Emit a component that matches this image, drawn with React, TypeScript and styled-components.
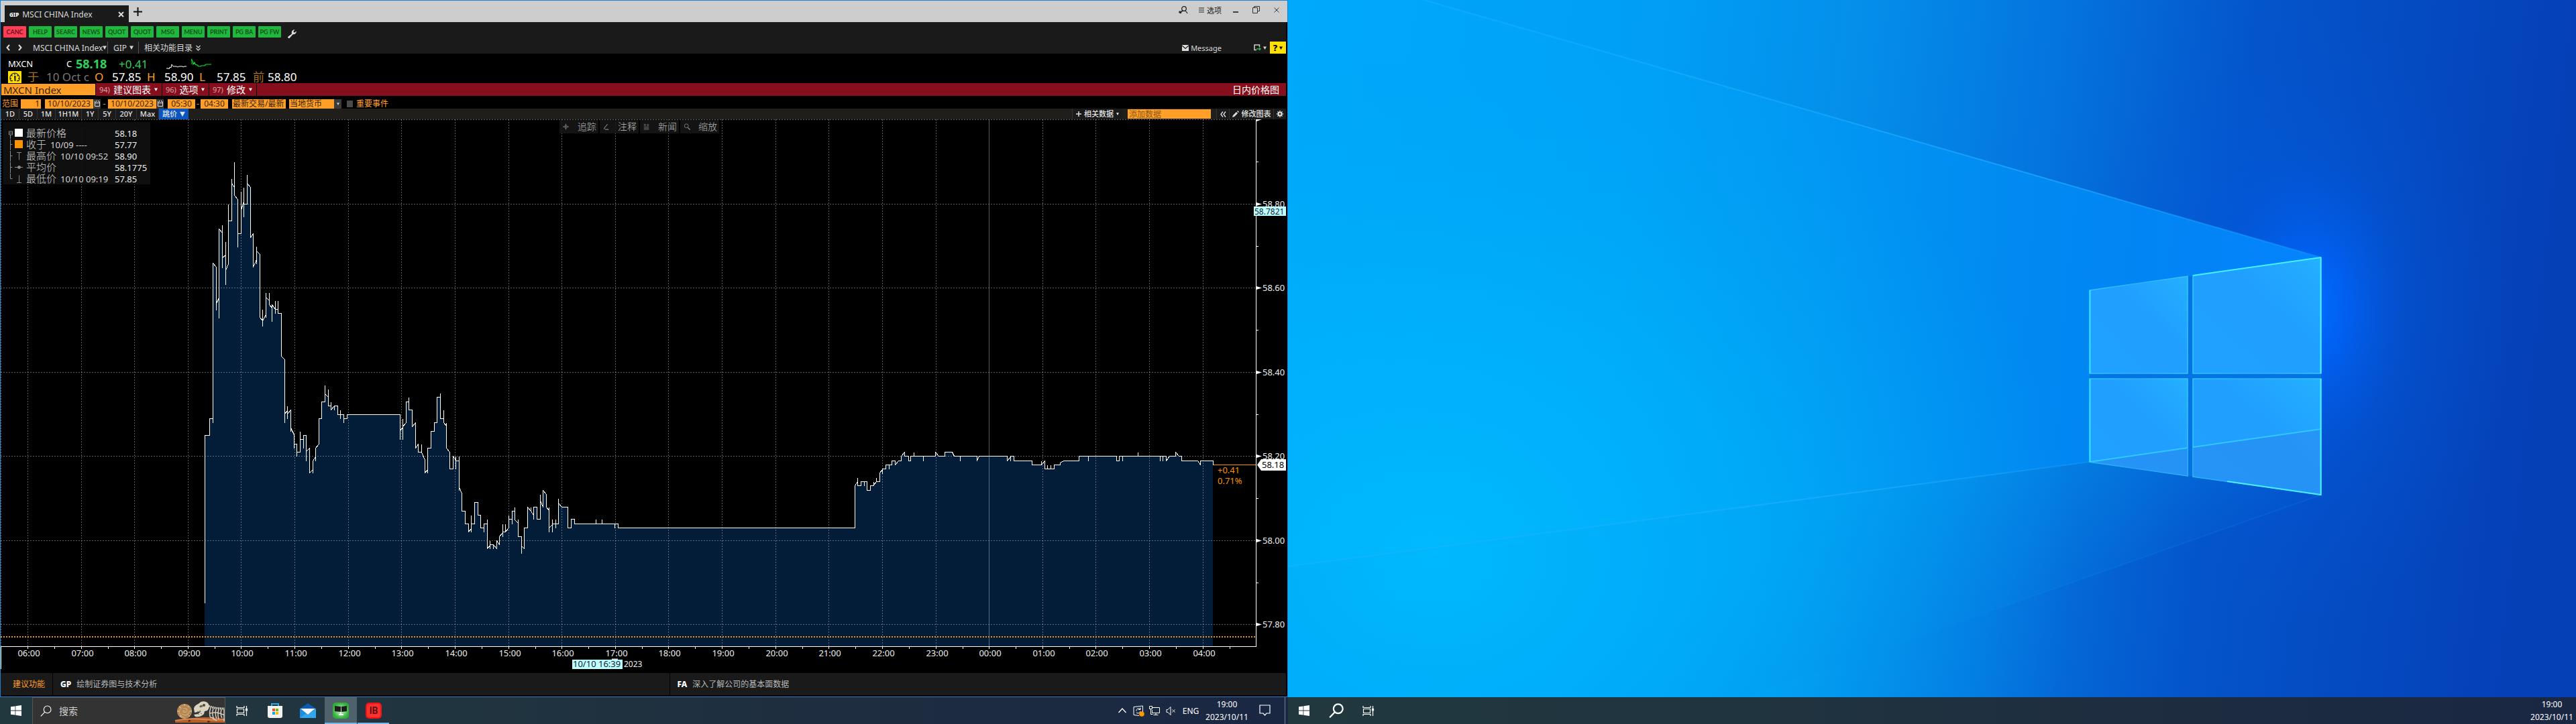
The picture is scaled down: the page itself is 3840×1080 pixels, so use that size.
import React from "react";
import styled, { createGlobalStyle, css } from "styled-components";

const latin = `"Noto Sans", "Noto Sans CJK SC", sans-serif`;

const GlobalStyle = createGlobalStyle`
  * { box-sizing: border-box; }
  html, body, #root { height: 100%; }
  body { margin: 0; background: #000; font-family: ${latin}; font-size: 12px; color: #fff; overflow: hidden; }
  button, input, select { font-family: inherit; font-size: inherit; border: 0; margin: 0; padding: 0; border-radius: 0; color: inherit; background: none; outline: none; }
  svg { display: block; flex: none; }
`;

/* ---------- page ---------- */
const Desktop = styled.div`
  display: grid;
  grid-template-columns: 1fr 1fr;
  height: 100vh;
`;
const Monitor = styled.section`
  display: flex;
  flex-direction: column;
  min-width: 0;
  min-height: 0;
`;
const Window = styled.main`
  flex: 1;
  min-height: 0;
  display: flex;
  flex-direction: column;
  border: 1px solid #1c7fd0;
  background: #000;
`;
const Body = styled.div`
  flex: 1;
  min-height: 0;
  display: flex;
  flex-direction: column;
  padding: 0 2px 2px 0;
`;
const Spacer = styled.div`
  flex: 1;
`;

/* ---------- title bar ---------- */
const TitleBar = styled.header`
  display: flex;
  align-items: flex-end;
  height: 32px;
  padding-left: 6px;
  background: #cdcdcd;
  color: #1a1a1a;
`;
const WindowTab = styled.div`
  display: flex;
  align-items: center;
  gap: 5px;
  width: 185px;
  height: 25px;
  padding: 2px 7px 0;
  background: #1a1a1a;
  color: #d8d8d8;
  font-size: 12px;
  white-space: nowrap;
`;
const TabCode = styled.b`
  font-size: 8px;
  font-weight: 800;
  color: #fff;
`;
const IconButton = styled.button<{ $w?: number }>`
  display: flex;
  align-items: center;
  justify-content: center;
  width: ${(p) => p.$w ?? 24}px;
  height: 100%;
`;
const TitleActions = styled.div`
  display: flex;
  align-items: center;
  height: 27px;
  align-self: flex-start;
  font-size: 11px;
`;
const OptionsButton = styled.button`
  display: flex;
  align-items: center;
  gap: 4px;
  width: 50px;
  padding-left: 10px;
  white-space: nowrap;
`;

/* ---------- toolbars ---------- */
const KeyRow = styled.nav`
  display: flex;
  align-items: flex-start;
  gap: 4px;
  height: 29px;
  padding: 6px 4px 0;
  background: #1a1a1a;
`;
const KeyButton = styled.button<{ $danger?: boolean }>`
  width: 34px;
  height: 17px;
  white-space: nowrap;
  border-radius: 1px;
  background: ${(p) => (p.$danger ? "#ff3e55" : "#1fb83c")};
  color: ${(p) => (p.$danger ? "#5a0c1c" : "#0b4a18")};
  font-family: Lato, sans-serif;
  font-weight: 600;
  font-size: 9px;
  line-height: 15px;
`;
const NavRow = styled.nav`
  display: flex;
  align-items: center;
  height: 18px;
  padding-left: 4px;
  background: #1a1a1a;
  color: #d6d6d6;
  font-size: 12px;
`;
const NavButton = styled.button<{ $w?: number; $small?: boolean }>`
  display: flex;
  align-items: center;
  justify-content: space-between;
  width: ${(p) => (p.$w ? `${p.$w}px` : "auto")};
  height: 18px;
  padding: 0 8px;
  white-space: nowrap;
  font-size: ${(p) => (p.$small ? 11 : 12)}px;
  & + & { box-shadow: -1px 0 0 #555; }
`;
const HelpButton = styled.button`
  display: flex;
  align-items: center;
  justify-content: center;
  gap: 3px;
  width: 24px;
  height: 18px;
  background: #ffe000;
  color: #000;
  font-weight: 800;
  font-size: 13px;
  line-height: 18px;
`;

/* ---------- quote ---------- */
const Quote = styled.section`
  height: 44px;
  padding: 6px 0 0 11px;
`;
const QuoteRow = styled.div`
  display: flex;
  align-items: center;
  height: 19px;
  white-space: nowrap;
`;
const Cell = styled.span<{ $w: number; $c?: string; $strong?: boolean; $small?: boolean }>`
  width: ${(p) => p.$w}px;
  color: ${(p) => p.$c ?? "#fff"};
  font-size: ${(p) => (p.$strong ? 18 : p.$small ? 13 : 17)}px;
  font-weight: ${(p) => (p.$strong ? 700 : 400)};
  line-height: 19px;
`;

/* ---------- function bar ---------- */
const FunctionBar = styled.nav`
  display: flex;
  gap: 1px;
  height: 19px;
  padding-left: 1px;
  background: #000;
`;
const SecurityInput = styled.input`
  width: 140px;
  height: 17px;
  margin: 1px 0;
  padding: 0 3px;
  background: #ff9f28;
  color: #3c2600;
  font-size: 15px;
`;
const FunctionButton = styled.button<{ $w: number }>`
  display: flex;
  align-items: center;
  justify-content: space-between;
  width: ${(p) => p.$w}px;
  padding: 0 6px 0 5px;
  background: #870f1d;
  font-size: 14px;
  line-height: 19px;
  white-space: nowrap;
  small { font-size: 11px; color: #d9a3a9; }
`;
const FunctionTitle = styled.h1`
  flex: 1;
  margin: 0;
  padding-right: 10px;
  background: #870f1d;
  text-align: right;
  font-weight: 400;
  font-size: 14px;
  line-height: 19px;
`;

/* ---------- range ---------- */
const RangeRow = styled.form`
  display: flex;
  align-items: center;
  height: 19px;
  padding: 4px 0 0 2px;
  color: #ff9f28;
  font-size: 12px;
  line-height: 15px;
  white-space: nowrap;
`;
const RangeLabel = styled.label`
  width: 28px;
`;
const field = css`
  height: 14px;
  background: #ff9f28;
  color: #3c2600;
  line-height: 14px;
`;
const RangeInput = styled.input<{ $w: number; $align?: string }>`
  ${field}
  width: ${(p) => p.$w}px;
  text-align: ${(p) => p.$align ?? "center"};
  padding: 0 2px;
`;
const RangeSelect = styled.select<{ $w: number }>`
  ${field}
  appearance: none;
  width: ${(p) => p.$w}px;
  padding: 0 1px;
  font-size: 12px;
`;
const SmallBox = styled.button`
  display: flex;
  align-items: center;
  justify-content: center;
  width: 11px;
  height: 14px;
  background: #3a3a3a;
  color: #ccc;
`;
const Gap = styled.span<{ $w: number }>`
  width: ${(p) => p.$w}px;
  text-align: center;
`;
const EventBox = styled.input`
  appearance: none;
  width: 9px;
  height: 10px;
  margin: 0 5px 0 8px;
  background: #4a4a4a;
`;

/* ---------- period tabs ---------- */
const PeriodRow = styled.nav`
  display: flex;
  align-items: stretch;
  height: 16px;
  background: #1f1e1a;
  color: #e4e4e4;
`;
const PeriodButton = styled.button<{ $w: number; $on?: boolean }>`
  display: flex;
  align-items: center;
  justify-content: center;
  gap: 4px;
  width: ${(p) => p.$w}px;
  border-left: 1px solid #333;
  background: ${(p) => (p.$on ? "#0a55c0" : "#1b1b1b")};
  font-size: 11px;
  font-weight: 500;
  line-height: 16px;
  white-space: nowrap;
`;
const DataInput = styled.input`
  width: 124px;
  height: 14px;
  margin: 1px 8px;
  padding: 0 2px;
  background: #ff9f28;
  color: #3c2600;
  font-size: 12px;
  &::placeholder { color: #8a5a18; opacity: 1; }
`;

/* ---------- chart ---------- */
const ChartArea = styled.section`
  position: relative;
  flex: 1;
  min-height: 0;
  svg.plot { width: 100%; height: 100%; }
`;
const Legend = styled.table`
  position: absolute;
  left: 4px;
  top: 4px;
  width: 219px;
  border-collapse: collapse;
  border-top: 8px solid #0e0e0e;
  background: rgba(16, 16, 16, 0.92);
  color: #d4d4d4;
  font-size: 13px;
  line-height: 16px;
  white-space: nowrap;
  td, th { padding: 0; height: 16px; font-weight: 400; text-align: left; }
  th { width: 132px; font-family: "Noto Sans", sans-serif; }
  td:last-child { color: #f0f0f0; }
`;
const LegendMark = styled.td`
  width: 34px;
`;
const Cjk = styled.span`
  font-family: "Noto Sans CJK SC", sans-serif;
  font-weight: 300;
  font-size: 15px;
  margin-right: 6px;
`;
const ChartTools = styled.div`
  position: absolute;
  left: 833px;
  top: 1px;
  display: flex;
  gap: 2px;
`;
const ToolButton = styled.button`
  display: flex;
  align-items: center;
  justify-content: space-between;
  width: 58px;
  height: 20px;
  padding: 0 3px 0 5px;
  background: rgba(22, 22, 22, 0.85);
  color: #bcbcbc;
  font-size: 14px;
  font-weight: 300;
  line-height: 20px;
`;

/* ---------- footer ---------- */
const Footer = styled.footer`
  display: flex;
  height: 33px;
  background: #1a1a1a;
  color: #b8b8b8;
  font-size: 12px;
  line-height: 33px;
`;
const FooterLead = styled.div`
  width: 77px;
  padding-left: 18px;
  color: #ff9f28;
`;
const FooterLink = styled.a`
  flex: 1;
  padding-left: 11px;
  border-left: 1px solid #000;
  color: inherit;
  text-decoration: none;
  b { color: #fff; font-weight: 800; margin-right: 8px; }
`;

/* ---------- taskbar ---------- */
const Taskbar = styled.footer`
  display: flex;
  align-items: stretch;
  height: 40px;
  background: linear-gradient(90deg, #21383f, #20343f 35%, #1d2b40 75%, #1a2743);
  color: #fff;
  font-size: 12px;
`;
const TaskButton = styled.button<{ $on?: boolean; $open?: boolean; $w?: number }>`
  display: flex;
  align-items: center;
  justify-content: center;
  width: ${(p) => p.$w ?? 48}px;
  background: ${(p) => (p.$on ? "#4f626b" : "transparent")};
  border-bottom: ${(p) => (p.$open ? "2px solid #76b9ed" : "0")};
  padding-top: ${(p) => (p.$open ? 2 : 0)}px;
`;
const Pinned = styled.div`
  display: flex;
  gap: 1px;
  padding-left: 1px;
`;
const SearchBox = styled.label`
  display: flex;
  align-items: center;
  width: 288px;
  padding-left: 11px;
  background: #333;
  border: 1px solid #555;
  border-bottom-width: 0;
  input { width: 166px; margin-left: 11px; font-size: 14px; }
  input::placeholder { color: #d0d0d0; opacity: 1; }
`;
const Tray = styled.div`
  display: flex;
  align-items: center;
  margin-left: auto;
`;
const Language = styled.button`
  width: 36px;
`;
const Clock = styled.time`
  width: 72px;
  text-align: center;
  line-height: 19px;
`;
const ShowDesktop = styled.button`
  width: 5px;
  height: 100%;
  border-left: 1px solid #77808e;
  margin-left: 10px;
`;
const Wallpaper = styled.div`
  flex: 1;
  min-height: 0;
  overflow: hidden;
  svg { width: 100%; height: 100%; }
`;

/* ---------- drawings ---------- */
const Down = ({ s = 6, c = "currentColor" }: { s?: number; c?: string }) => (
  <svg width={s} height={s} viewBox="0 0 6 6"><path d="M0 .5h6L3 6z" fill={c} /></svg>
);
const WinLogo = () => (
  <svg width="16" height="16" viewBox="0 0 16 16" fill="#fff">
    <path d="M0 2.3 6.5 1.4v6.2H0zM7.3 1.3 16 0v7.6H7.3zM0 8.4h6.5v6.2L0 13.7zM7.3 8.4H16V16l-8.7-1.3z" />
  </svg>
);
const SearchGlyph = ({ s, w }: { s: number; w: number }) => (
  <svg width={s} height={s} viewBox="0 0 20 20" fill="none" stroke="#fff" strokeWidth={w}>
    <circle cx="12.5" cy="7.5" r="6.3" /><path d="M8 12 1 19.3" />
  </svg>
);
const TaskView = () => (
  <svg width="18" height="17" viewBox="0 0 18 17" fill="none" stroke="#fff" strokeWidth="1.2">
    <path d="M1 1v2.5h11V1M1 16v-2.500h11V16M1.500 5.500h10v6h-10zM15.500 1v4M15.500 9v7" /><rect x="14.500" y="5.500" width="2" height="2.500" fill="#fff" />
  </svg>
);
const Calendar = () => (
  <svg width="8" height="9" viewBox="0 0 8 9" fill="none" stroke="#ddd"><path d="M.5 1v7.500h7V1M.5 3.500h7M2.500 0v2M5.500 0v2" /></svg>
);
const Fossils = () => (
  <svg width="74" height="34" viewBox="0 0 74 34">
    <path d="M-2 34Q6 28 20 28Q44 24 74 28V34z" fill="#b5602c" />
    <path d="M0 31q20-4 40-2t34 0" stroke="#d98a50" strokeWidth="2" fill="none" />
    <path d="M20 30l4 1-4 2zM48 31l5 1-4 2z" fill="#3a1a0a" />
    <circle cx="14" cy="17" r="11" fill="#c79a68" />
    <path d="M4 20a10 10 0 1 1 11 7M8 24a9 8 0 1 1 13-2a7 7 0 1 1-4-11a5 5 0 1 1-5 9a3 3 0 1 1 4-3" fill="none" stroke="#a07848" strokeWidth="1" />
    <path d="M3 17h3M6 10l2 2M14 6v3M21 9l-2 2M25 17h-3M22 25l-2-2M7 25l2-2" stroke="#f0cfa0" />
    <path d="M28 13c1-5 5-6 8-8 4-4 10-3 13 0 3 4 2 8-1 11l-4 1-1 4c-4 4-8 5-13 4l-2-3 6-1 5-4-5 1-5 1z" fill="#d9d3c0" />
    <circle cx="43" cy="8" r="2" fill="#4a463a" /><path d="M37 9l3-1 1 2-4 1zM33 18l2-1M36 17l2-1M34 21l2 1M38 20l2 1" stroke="#6a6454" fill="#6a6454" />
    <path d="M50 9c6 3 14 4 24 4" stroke="#dcd6c4" strokeWidth="3" strokeDasharray="2 1" fill="none" />
    <path d="M53 12q-3 8 0 15M57 13q-3 8 1 16M61 14q-2 8 1 14M65 14q-2 7 0 15M69 14q-2 8 1 13M73 14v18M52 20q10-3 22 3M54 26l8 5" stroke="#d2ccba" strokeWidth="1.500" fill="none" />
  </svg>
);
const Speedometer = () => (
  <svg width="20" height="18" viewBox="0 0 20 18">
    <rect width="20" height="18" fill="#ffe000" />
    <path d="M4 14.500A7 7.500 0 1 1 16 14.500M4 14.500h3M16 14.500h-3M10 3.500v2.500M5 6l1.500 1.500M15 6l-1.500 1.500M3 11h2M15 11h2" fill="none" stroke="#222" strokeWidth="1.300" />
    <path d="M9 7l2.500 0v8h-2z" fill="#222" />
  </svg>
);

/* ---------- chart data: screen-space trace of the session ---------- */
const trace =
  "M305 899V649H312V624H317V630V392L322 398V462V452L326 444V474V341L331 347V335V399V384L336 380V360V424V403L340 393V304V329H345V266V273L349 279V241V291L354 297V368V348H359V285V313L363 300V279V323V304H368V260V273L373 279V354L377 348V398L382 387V393V367V374L387 379V473L391 478V461V486V478L396 469V473V436V443L401 448V436V454L405 459V479V454L410 461V448V467V461H414V448V467H419V531L424 536V630V617L428 612V605V624V617L433 611" +
  "V643V638L438 648V668V662H442V680V674H447V643V655H452V668V649H456V687V673L461 668V705L466 700V705V687L470 681V687V668L475 662V624H479V599H484V574V587L489 592V580V605H493V599V611L498 605V611V605H503V618H507V611V624V618H512V630V624H517V618H596V655V642L600 637V624V655V636L605 630V599H609V592V611H614V636L619 630V668L623 662V674H628V662V674L633 686V705L637 700V705V668H642V643H647V630H651V592H656V586V624H661V611V630L665 635V630V668L670 674V699H675V680L679 686V680V699V687H684V680V731V726L688 736V762H693V781H698V793L702 788V768V793V781H707V749H712V768H716V787H721" +
  "V793V781H726V774V818L730 813V806V818V812H735V818V812L740 818V806L744 812V800L749 794V781V800V793H753V781V793L758 787V768V774H763V781V762H767V756V775L772 780V774V800H777V825V814L781 818V787H786V756L791 762V756V762L795 768V774V756H800V774H805V737V746L809 756V731L814 737V756L818 761V756V793V787L823 782V774V793V781H828V774V787V781H832V743V750L837 756H846V787H851V774H856V781H888V774V781H897V774V781H916V787V781H921V787H1274" +
  "V724L1278 718V712V724H1283V718H1288V724V718H1292V731H1297V724H1302V718V723L1306 718V712V718H1311V705L1315 700V706V699H1320V693H1325V699V693H1329V687H1334V693L1339 687H1343V680L1348 674V680H1354V687H1357V680H1362V674V680H1376V687V680H1394V674L1399 680H1408V674H1419L1422 680H1431V687V680H1456V687L1459 680H1501V687L1506 681V687V680H1511V687H1538V693H1552V687V693L1557 687V699H1561V693V699H1566V693V699H1571V693H1580V690L1585 687H1608V680H1622V687V680H1664V687H1668V680H1673V687V680H1696V674V680H1729V687V680H1733V687V680H1738V687L1743 680H1752V674L1757 680H1761V687H1785L1789 693V687H1808V693";

const hours = ["06", "07", "08", "09", "10", "11", "12", "13", "14", "15", "16", "17", "18", "19", "20", "21", "22", "23", "00", "01", "02", "03", "04"];
const hourX = (i: number) => Math.round(41 + i * 79.62);
const prices: [string, number][] = [["58.80", 304], ["58.60", 429], ["58.40", 555], ["58.20", 680], ["58.00", 806], ["57.80", 931]];

const Plot = () => (
  <svg className="plot" viewBox="1 178 1916 826" fontFamily={`"Noto Sans", sans-serif`} fontSize="13" role="img" aria-label="MXCN Index">
    <g shapeRendering="crispEdges">
      <path d={`${trace}V964H305Z`} fill="#031d38" />
      <g stroke="#c4cdd6" strokeOpacity=".45" strokeDasharray="2 2">
        <path d="M1 178.500H1872M1.500 178V964" />
        {prices.map(([p, y]) => <path key={p} d={`M1 ${y + 0.5}H1872`} />)}
        {hours.map((h, i) => <path key={h} d={`M${hourX(i) + 0.5} 178V964`} strokeDasharray={h === "00" ? "none" : "2 2"} />)}
      </g>
      <path d="M1 950H1872" stroke="#f79400" strokeWidth="2" strokeDasharray="2 2" />
      <path d={trace} transform="translate(.5 .5)" fill="none" stroke="#fff" />
      <path d="M1809 693.500H1872" stroke="#f79400" />
      <path d="M1872.500 178V964.500H1M1.500 964V998" fill="none" stroke="#fff" />
      {hours.map((h, i) => <path key={h} d={`M${hourX(i) + 0.5} 964v4M${hourX(i) + 40.5} 964v4`} stroke="#fff" />)}
      {[241, 367, 492, 618, 743, 869].map((y) => <path key={y} d={`M1873 ${y + 0.5}h3`} stroke="#fff" />)}
    </g>
    <path d="M1873 178h8l-8 3z" fill="#fff" />
    {prices.map(([p, y]) => (
      <g key={p}>
        <path d={`M1873 ${y - 2}l8 2.500-8 2.500z`} fill="#fff" />
        <text x="1882" y={y + 5} fill="#eee">{p}</text>
      </g>
    ))}
    {hours.map((h, i) => <text key={h} x={hourX(i) + 2} y="979" fill="#eee" textAnchor="middle">{h}:00</text>)}
    <rect x="1869" y="308" width="48" height="14" fill="#c0ffff" />
    <text x="1870" y="320" fontSize="12" fill="#123">58.7821</text>
    <path d="M1880 685h37v17h-37l-6-8.500z" fill="#fff" />
    <text x="1881" y="698" fill="#000">58.18</text>
    <text x="1815" y="706" fill="#f79400">+0.41</text>
    <text x="1815" y="722" fill="#f79400">0.71%</text>
    <path d="M912 982.500h9v2h-9z" fill="#ddd" />
    <rect x="853" y="984" width="75" height="14" fill="#c0ffff" />
    <text x="854" y="995" fill="#123">10/10 16:39</text>
    <text x="930" y="995" fill="#eee" fontSize="12">2023</text>
  </svg>
);

const WallpaperArt = () => (
  <svg viewBox="0 0 1920 1040" preserveAspectRatio="none" aria-hidden="true">
    <defs>
      <linearGradient id="base" x1="0" x2="1" y1="0" y2=".06">
        <stop offset="0" stopColor="#00a6f9" /><stop offset=".28" stopColor="#009ff5" /><stop offset=".45" stopColor="#048eea" />
        <stop offset=".6" stopColor="#0474de" /><stop offset=".75" stopColor="#0455cb" /><stop offset="1" stopColor="#0540b7" />
      </linearGradient>
      <linearGradient id="beam" x1="0" x2="1540" y1="0" y2="0" gradientUnits="userSpaceOnUse">
        <stop offset="0" stopColor="#00aeff" stopOpacity=".4" /><stop offset=".45" stopColor="#00a0f8" stopOpacity=".55" />
        <stop offset=".75" stopColor="#008cf6" stopOpacity=".85" /><stop offset="1" stopColor="#0488ff" stopOpacity=".9" />
      </linearGradient>
      <linearGradient id="low" x1="1000" y1="640" x2="1200" y2="960" gradientUnits="userSpaceOnUse">
        <stop offset="0" stopColor="#0096f0" stopOpacity=".8" /><stop offset=".5" stopColor="#0486e6" stopOpacity=".45" /><stop offset="1" stopColor="#0478dc" stopOpacity="0" />
      </linearGradient>
      <radialGradient id="cyan" cx="0" cy="0" r="1" gradientUnits="userSpaceOnUse" gradientTransform="translate(220 830) scale(960 800)">
        <stop offset="0" stopColor="#00bcff" stopOpacity=".9" /><stop offset=".5" stopColor="#00b2fa" stopOpacity=".65" /><stop offset="1" stopColor="#00a4f4" stopOpacity="0" />
      </radialGradient>
      <radialGradient id="glow" cx="0" cy="0" r="1" gradientUnits="userSpaceOnUse" gradientTransform="translate(1525 460) scale(150 240)">
        <stop offset="0" stopColor="#006eff" /><stop offset=".35" stopColor="#0064fa" stopOpacity=".7" /><stop offset="1" stopColor="#0455d8" stopOpacity="0" />
      </radialGradient>
      <radialGradient id="halo" cx="0" cy="0" r="1" gradientUnits="userSpaceOnUse" gradientTransform="translate(1500 470) scale(330 460)">
        <stop offset="0" stopColor="#0060f0" stopOpacity=".6" /><stop offset="1" stopColor="#0455d8" stopOpacity="0" />
      </radialGradient>
      <linearGradient id="ray" x1="0" x2="1" y1="0" y2="0">
        <stop offset="0" stopColor="#20b4ff" stopOpacity=".4" /><stop offset=".7" stopColor="#22acff" stopOpacity=".7" /><stop offset="1" stopColor="#22a8ff" stopOpacity=".3" />
      </linearGradient>
      <linearGradient id="pane" x1="0" x2="1" y1="1" y2="0">
        <stop offset="0" stopColor="#20a0ff" /><stop offset=".6" stopColor="#209fff" /><stop offset="1" stopColor="#24b0ff" />
      </linearGradient>
      <linearGradient id="edge" x1="0" x2="1" y1="0" y2="0">
        <stop offset="0" stopColor="#2cc8ff" /><stop offset=".5" stopColor="#2ab4ff" /><stop offset="1" stopColor="#34c8ff" />
      </linearGradient>
    </defs>
    <rect width="1920" height="1040" fill="url(#base)" />
    <rect width="1920" height="1040" fill="url(#halo)" />
    <rect width="1920" height="1040" fill="url(#glow)" />
    <path d="M0 845 1195 689 1540 738 680 1040H0Z" fill="url(#low)" />
    <path d="M0 0H203L1540 384V560L1195 689 0 845Z" fill="url(#beam)" />
    <rect width="1300" height="1040" fill="url(#cyan)" />
    <path d="M203 0 1540 384" stroke="url(#ray)" strokeWidth="2" />
    <path d="M0 845 1195 689" stroke="url(#ray)" strokeWidth="2" />
    <path d="M1540 738 900 963" stroke="#1090f0" strokeOpacity=".2" strokeWidth="2" />
    <path d="M1195 433 1540 384V738L1195 689Z" fill="#0474e4" />
    <g fill="url(#pane)" stroke="url(#edge)" strokeWidth="1.5">
      <path d="M1195 433 1341 412V557H1195Z" />
      <path d="M1349 411 1540 384V557H1349Z" />
      <path d="M1195 565H1341V710L1195 689Z" />
      <path d="M1349 565H1540V738L1349 711Z" />
    </g>
    <path d="M1195 689 1341 668V710ZM1349 667 1540 640V738L1349 711Z" fill="#2a8cf0" fillOpacity=".6" />
    <path d="M1195 689 1341 668M1349 667 1540 640" stroke="#30c8ff" strokeWidth="2" />
    <path d="M1195.500 433V557M1195.500 565V689" stroke="#30e0ff" strokeWidth="2" />
    <path d="M1349 411 1540 384M1539.500 384V557M1539.500 565V738L1400 718" fill="none" stroke="#44f0ff" strokeWidth="2" />
  </svg>
);

const keys = ["CANC", "HELP", "SEARC", "NEWS", "QUOT", "QUOT", "MSG", "MENU", "PRINT", "PG BA", "PG FW"];
const periods: [string, number][] = [["1D", 27], ["5D", 27], ["1M", 27], ["1H1M", 39], ["1Y", 25], ["5Y", 26], ["20Y", 31], ["Max", 33]];

const orange = "#f79400";

const LegendGlyph = ({ kind }: { kind: number }) => (
  <svg width="34" height="16" viewBox="0 0 34 16" fill="none" stroke="#8a8a8a">
    {kind === 0 && <><path d="M8.500 5h5v5h-5zM9.500 7.500h3M10.500 10v6" /><rect x="17" y="1" width="12" height="12" fill="#fff" stroke="none" /></>}
    {kind === 1 && <><path d="M10.500 0v16M10.500 7.500h3" /><rect x="17" y="1" width="12" height="12" fill={orange} stroke="none" /></>}
    {kind === 2 && <path d="M10.500 0v16M10.500 7.500h3M20 2.500h7M23.500 2.500v11" />}
    {kind === 3 && <><path d="M10.500 0v16M10.500 7.500h3M17 7.500h12" /><circle cx="23.500" cy="7.500" r="2" fill="#8a8a8a" /></>}
    {kind === 4 && <path d="M10.500 0v7.500h3M20 13.500h7M23.500 2.500v11" />}
  </svg>
);
const legendRows: [string, string, string][] = [
  ["最新价格", "", "58.18"],
  ["收于", "10/09 ----", "57.77"],
  ["最高价", "10/10 09:52", "58.90"],
  ["平均价", "", "58.1775"],
  ["最低价", "10/10 09:19", "57.85"],
];

export default function App() {
  return (
    <Desktop>
      <GlobalStyle />
      <Monitor>
        <Window>
          <TitleBar>
            <WindowTab>
              <TabCode>GIP</TabCode>
              <span>MSCI CHINA Index</span>
              <Spacer />
              <IconButton $w={10} aria-label="关闭标签">
                <svg width="9" height="9" viewBox="0 0 9 9" stroke="#ddd" strokeWidth="2"><path d="M1 1l7 7M8 1 1 8" /></svg>
              </IconButton>
            </WindowTab>
            <IconButton $w={26} aria-label="新标签">
              <svg width="13" height="13" viewBox="0 0 13 13" stroke="#111" strokeWidth="2"><path d="M6.500 0v13M0 6.500h13" /></svg>
            </IconButton>
            <Spacer />
            <TitleActions>
              <IconButton $w={26} aria-label="查找用户">
                <svg width="14" height="12" viewBox="0 0 14 12" fill="none" stroke="#222" strokeWidth="1.300"><circle cx="8" cy="4" r="3.300" /><path d="M3 11q1-4 4-4M9 7q3 1 4 4M0 9h4M2 7v4" /></svg>
              </IconButton>
              <OptionsButton>
                <svg width="8" height="8" viewBox="0 0 8 8" stroke="#222"><path d="M0 1h8M0 4h8M0 7h8" /></svg>选项
              </OptionsButton>
              <IconButton $w={30} aria-label="最小化">
                <svg width="8" height="8" viewBox="0 0 8 8" stroke="#111" strokeWidth="1.500"><path d="M0 7h8" /></svg>
              </IconButton>
              <IconButton $w={30} aria-label="还原">
                <svg width="11" height="11" viewBox="0 0 11 11" fill="none" stroke="#333"><path d="M.5 2.500h7v8h-7zM2.500 2.500v-2h8v7h-3" /></svg>
              </IconButton>
              <IconButton $w={32} aria-label="关闭">
                <svg width="8" height="8" viewBox="0 0 8 8" stroke="#333"><path d="M.5.5l7 7M7.500.5l-7 7" /></svg>
              </IconButton>
            </TitleActions>
          </TitleBar>
          <Body>
            <KeyRow>
              {keys.map((k, i) => <KeyButton key={i} $danger={i === 0}>{k}</KeyButton>)}
              <IconButton $w={24} aria-label="设置">
                <svg width="13" height="13" viewBox="0 0 13 13"><path d="M0 11 6 6.500Q5 3 7.500 1 9 0 10.500.3L8.500 2.500l.3 1.700 1.700.4 2.200-2Q13 4.500 11.500 6 10 7.500 7.600 7.200L2.500 13q-1 .3-1.800-.4T0 11z" fill="#ddd" /></svg>
              </IconButton>
            </KeyRow>
            <NavRow>
              <IconButton $w={13} aria-label="后退"><svg width="6" height="10" viewBox="0 0 6 10" fill="none" stroke="#ddd" strokeWidth="2"><path d="M5 1 1.500 5 5 9" /></svg></IconButton>
              <IconButton $w={23} aria-label="前进"><svg width="6" height="10" viewBox="0 0 6 10" fill="none" stroke="#ddd" strokeWidth="2"><path d="M1 1l3.500 4L1 9" /></svg></IconButton>
              <NavButton $w={120}>MSCI CHINA Index <Down /></NavButton>
              <NavButton $w={46}>GIP <Down /></NavButton>
              <NavButton $w={100}>相关功能目录
                <svg width="7" height="9" viewBox="0 0 7 9" fill="none" stroke="#ccc" strokeWidth="1.300"><path d="M.5 1l3 3 3-3M.5 5l3 3 3-3" /></svg>
              </NavButton>
              <Spacer />
              <NavButton $w={75} $small>
                <svg width="10" height="9" viewBox="0 0 10 9"><path d="M0 0h10v9H0z" fill="#ddd" /><path d="M0 1l5 4.500L10 1" fill="none" stroke="#1a1a1a" strokeWidth="1.300" /></svg>
                Message
              </NavButton>
              <IconButton $w={64} aria-label="导出">
                <Gap $w={34} />
                <svg width="11" height="10" viewBox="0 0 11 10" fill="none" stroke="#ccc" strokeWidth="1.500"><path d="M8.500 4V1H1v7.500h3" /><path d="M4 7h6M8 5l2 2-2 2" stroke="#23b843" /></svg>
                <Gap $w={3} /><Down s={5} />
              </IconButton>
              <HelpButton aria-label="帮助">?<Down s={5} /></HelpButton>
            </NavRow>

            <Quote>
              <QuoteRow>
                <Cell $w={87} $small>MXCN</Cell>
                <Cell $w={14} $small>C</Cell>
                <Cell $w={64} $strong $c="#2fd15a">58.18</Cell>
                <Cell $w={71} $c="#2fd15a">+0.41</Cell>
                <Cell $w={37}>
                  <svg width="30" height="20" viewBox="0 0 30 20" fill="none" stroke="#fff"><path d="M0 16h3l1 1 1-3 2 1 1-5 2 3h5l2 1 2-1h5l1 1 2-1h3" /></svg>
                </Cell>
                <svg width="30" height="19" viewBox="0 0 30 19" fill="none" stroke="#00f028" strokeWidth="1.200"><path d="M0 10V2l2 3 1 5 2-3 1 3 3 1 2 2h3l1-1h5l2-2h8" /></svg>
              </QuoteRow>
              <QuoteRow>
                <Cell $w={29}><Speedometer /></Cell>
                <Cell $w={28} $c="#a8701c">于</Cell>
                <Cell $w={72} $c="#777">10 Oct c</Cell>
                <Cell $w={26} $c="#ff9f28">O</Cell><Cell $w={52}>57.85</Cell>
                <Cell $w={26} $c="#ff9f28">H</Cell><Cell $w={52}>58.90</Cell>
                <Cell $w={26} $c="#ff9f28">L</Cell><Cell $w={54}>57.85</Cell>
                <Cell $w={22} $c="#a8701c">前</Cell><Cell $w={52}>58.80</Cell>
              </QuoteRow>
            </Quote>

            <FunctionBar>
              <SecurityInput aria-label="证券" defaultValue="MXCN Index" />
              <FunctionButton $w={98}><small>94)</small>建议图表<Down s={5} /></FunctionButton>
              <FunctionButton $w={69}><small>96)</small>选项<Down s={5} /></FunctionButton>
              <FunctionButton $w={70}><small>97)</small>修改<Down s={5} /></FunctionButton>
              <FunctionTitle>日内价格图</FunctionTitle>
            </FunctionBar>

            <RangeRow>
              <RangeLabel htmlFor="days">范围</RangeLabel>
              <RangeInput id="days" $w={30} $align="right" defaultValue="1" />
              <Gap $w={6} />
              <RangeInput aria-label="开始日期" $w={72} defaultValue="10/10/2023" />
              <SmallBox type="button" aria-label="选择开始日期"><Calendar /></SmallBox>
              <Gap $w={11}>-</Gap>
              <RangeInput aria-label="结束日期" $w={72} defaultValue="10/10/2023" />
              <SmallBox type="button" aria-label="选择结束日期"><Calendar /></SmallBox>
              <Gap $w={6} />
              <RangeInput aria-label="开始时间" $w={41} defaultValue="05:30" />
              <Gap $w={8}>-</Gap>
              <RangeInput aria-label="结束时间" $w={41} defaultValue="04:30" />
              <Gap $w={6} />
              <RangeSelect aria-label="价格类型" $w={80}><option>最新交易/最新</option></RangeSelect>
              <Gap $w={5} />
              <RangeSelect aria-label="货币" $w={67}><option>当地货币</option></RangeSelect>
              <SmallBox type="button" aria-label="展开"><Down s={4} /></SmallBox>
              <EventBox id="events" type="checkbox" />
              <label htmlFor="events">重要事件</label>
            </RangeRow>

            <PeriodRow>
              {periods.map(([p, w]) => <PeriodButton key={p} $w={w}>{p}</PeriodButton>)}
              <PeriodButton $w={45} $on>跳价 <Down s={8} /></PeriodButton>
              <Spacer />
              <PeriodButton $w={75}>
                <svg width="8" height="8" viewBox="0 0 8 8" stroke="#ddd" strokeWidth="1.500"><path d="M4 0v8M0 4h8" /></svg>相关数据 <Down s={4} />
              </PeriodButton>
              <DataInput aria-label="添加数据" placeholder="添加数据" />
              <PeriodButton $w={19} aria-label="收起">
                <svg width="9" height="9" viewBox="0 0 9 9" fill="none" stroke="#ddd" strokeWidth="1.400"><path d="M4 .5l-3 4 3 4M8 .5l-3 4 3 4" /></svg>
              </PeriodButton>
              <PeriodButton $w={66}>
                <svg width="10" height="10" viewBox="0 0 10 10"><path d="M0 10l1-3 5-5 2 2-5 5zM7 1l1-1 2 2-1 1z" fill="#ddd" /></svg>修改图表
              </PeriodButton>
              <PeriodButton $w={19} aria-label="图表设置">
                <svg width="10" height="10" viewBox="0 0 10 10" fill="none" stroke="#ddd"><circle cx="5" cy="5" r="2.300" strokeWidth="1.800" /><path d="M5 0v2M5 8v2M0 5h2M8 5h2M1.500 1.500l1.400 1.400M7.100 7.100l1.400 1.400M8.500 1.500 7.100 2.900M2.900 7.100 1.500 8.500" strokeWidth="1.500" /></svg>
              </PeriodButton>
            </PeriodRow>

            <ChartArea>
              <Plot />
              <Legend>
                <tbody>
                  {legendRows.map(([name, when, value], i) => (
                    <tr key={name}>
                      <LegendMark><LegendGlyph kind={i} /></LegendMark>
                      <th scope="row"><Cjk>{name}</Cjk>{when}</th>
                      <td>{value}</td>
                    </tr>
                  ))}
                </tbody>
              </Legend>
              <ChartTools>
                <ToolButton><svg width="9" height="10" viewBox="0 0 12 12" fill="none" stroke="#888"><path d="M6 0v12M0 6h12M6 2l4 4-4 4-4-4z" /></svg>追踪</ToolButton>
                <ToolButton><svg width="9" height="10" viewBox="0 0 12 12" fill="none" stroke="#888"><path d="M9 1 3 8l-1 3M4 11.500h7" strokeWidth="1.500" /></svg>注释</ToolButton>
                <ToolButton><svg width="9" height="10" viewBox="0 0 12 12" stroke="#888"><path d="M1 1.500h4M1 3.500h4M7 1.500h4M7 4h4M1 6.500h10M1 9h10M1 11.500h10" /></svg>新闻</ToolButton>
                <ToolButton><svg width="10" height="10" viewBox="0 0 12 12" fill="none" stroke="#888"><circle cx="5" cy="4.500" r="3.500" /><path d="M7.500 7.500l4 4" strokeWidth="1.500" /></svg>缩放</ToolButton>
              </ChartTools>
            </ChartArea>

            <Footer>
              <FooterLead>建议功能</FooterLead>
              <FooterLink href="#gp"><b>GP</b>绘制证券图与技术分析</FooterLink>
              <FooterLink href="#fa"><b>FA</b>深入了解公司的基本面数据</FooterLink>
            </Footer>
          </Body>
        </Window>
        <Taskbar>
          <TaskButton aria-label="开始"><WinLogo /></TaskButton>
          <SearchBox>
            <SearchGlyph s={17} w={1.3} />
            <input aria-label="搜索" placeholder="搜索" />
            <Spacer />
            <Fossils />
          </SearchBox>
          <Pinned>
            <TaskButton aria-label="任务视图"><TaskView /></TaskButton>
            <TaskButton aria-label="商店">
              <svg width="24" height="24" viewBox="0 0 24 24"><path d="M7 6V2h10v4" fill="none" stroke="#2aa8ec" strokeWidth="2" /><path d="M1 5h22v15q0 3-3 3H4q-3 0-3-3z" fill="#f2f2f2" /><path d="M8 9h4v4H8z" fill="#f25022" /><path d="M13 9h4v4h-4z" fill="#7fba00" /><path d="M8 14h4v4H8z" fill="#00a4ef" /><path d="M13 14h4v4h-4z" fill="#ffb900" /></svg>
            </TaskButton>
            <TaskButton aria-label="邮件">
              <svg width="24" height="24" viewBox="0 0 24 24"><path d="M0 9 12 1l12 8v3H0z" fill="#0a5cb8" /><path d="M0 9l12 9L24 9v14H0z" fill="#2ea8f0" /><path d="M0 23 12 14 0 9z" fill="#1c8ce0" /><path d="M1 9h22l-11 9z" fill="#f4f8fc" /></svg>
            </TaskButton>
            <TaskButton $on $open aria-label="终端">
              <svg width="24" height="24" viewBox="0 0 24 24"><defs><radialGradient id="gr"><stop offset="0" stopColor="#c8ffc0" /><stop offset="1" stopColor="#2fae38" /></radialGradient></defs><rect width="24" height="24" rx="5" fill="url(#gr)" /><path d="M3 5l9 1v8l-9-1zM21 5l-8 1v8l8-1z" fill="#1c1c1c" /><path d="M12 14v4M9 18h7" stroke="#fff" strokeWidth="2" /></svg>
            </TaskButton>
            <TaskButton $open $w={47} aria-label="IB">
              <svg width="24" height="24" viewBox="0 0 24 24"><rect width="24" height="24" rx="5" fill="#f01414" /><rect x="2" y="2" width="20" height="20" rx="4" fill="#ff3030" /><text x="12" y="17" textAnchor="middle" fontFamily="Roboto, sans-serif" fontWeight="700" fontSize="14" fill="#5a1414">IB</text></svg>
            </TaskButton>
          </Pinned>
          <Tray>
            <IconButton aria-label="显示隐藏的图标"><svg width="12" height="8" viewBox="0 0 12 8" fill="none" stroke="#fff" strokeWidth="1.300"><path d="M.5 7 6 1l5.500 6" /></svg></IconButton>
            <IconButton aria-label="更新"><svg width="17" height="17" viewBox="0 0 17 17" fill="none" stroke="#fff"><path d="M14.500 10V1L1 2.500v12l8 1M5 8.500q0-4 4-3.500l2 1M11 3.500v3H8M11 9q0 3-4 3l-2-1" /><circle cx="13" cy="13" r="3.800" fill="#ff9800" stroke="none" /></svg></IconButton>
            <IconButton aria-label="网络"><svg width="16" height="15" viewBox="0 0 16 15" fill="none" stroke="#fff"><path d="M4.500 2.500h11v8h-11V6M.5.500h4v4h-4zM2.500 4.500v8h3M10 10.500v3M6.500 13.500h7" /></svg></IconButton>
            <IconButton aria-label="静音"><svg width="15" height="13" viewBox="0 0 15 13" fill="none" stroke="#fff"><path d="M1 4.500h2l4-4v12l-4-4H1zM9.500 4.500l4 4M13.500 4.500l-4 4" /></svg></IconButton>
            <Language>ENG</Language>
            <Clock>19:00<br />2023/10/11</Clock>
            <IconButton $w={40} aria-label="通知"><svg width="17" height="18" viewBox="0 0 17 18" fill="none" stroke="#fff" strokeWidth="1.200"><path d="M1 1h15v12h-5l-2.500 3L6 13H1z" /></svg></IconButton>
            <ShowDesktop aria-label="显示桌面" />
          </Tray>
        </Taskbar>
      </Monitor>

      <Monitor>
        <Wallpaper><WallpaperArt /></Wallpaper>
        <Taskbar>
          <TaskButton aria-label="开始"><WinLogo /></TaskButton>
          <TaskButton aria-label="搜索"><SearchGlyph s={22} w={2} /></TaskButton>
          <TaskButton aria-label="任务视图"><TaskView /></TaskButton>
          <Tray><Clock>19:00<br />2023/10/11</Clock></Tray>
        </Taskbar>
      </Monitor>
    </Desktop>
  );
}
